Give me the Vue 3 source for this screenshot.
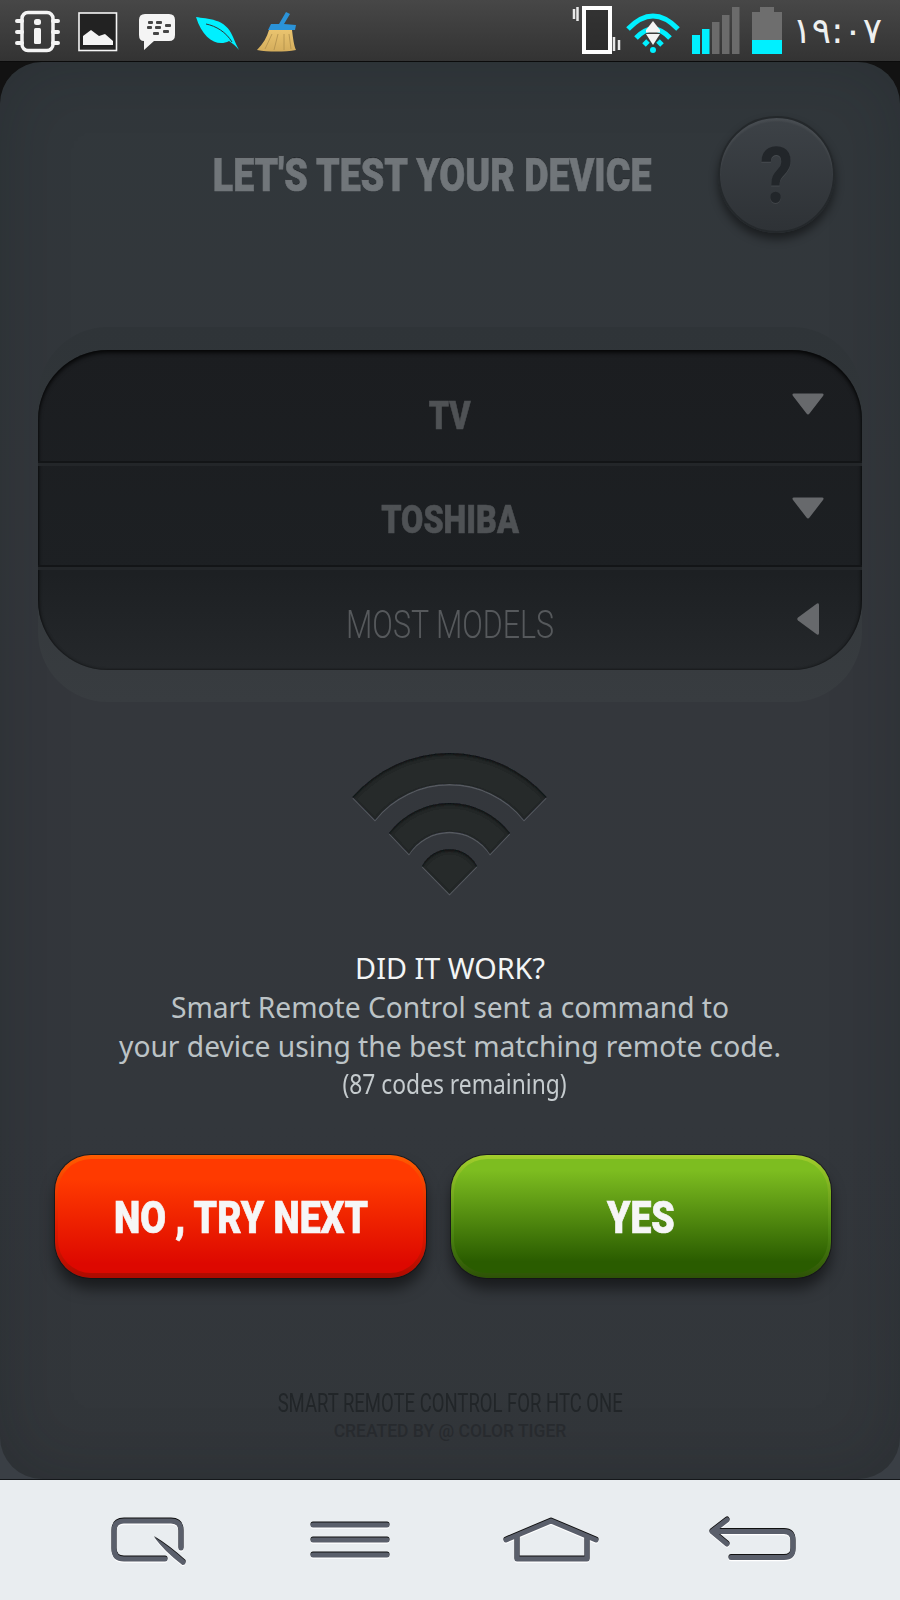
<template>
  <div class="screen">
    <header class="status-bar">
      <svg class="status-left" width="320" height="61" viewBox="0 0 320 61">
        <!-- chip / info -->
        <rect x="22" y="12.500" width="31" height="38" rx="6" fill="none" stroke="#f4f4f4" stroke-width="3.500" />
        <path d="M17 21h5M17 32h5M17 43h5M53 21h5M53 32h5M53 43h5" stroke="#f4f4f4" stroke-width="4" stroke-linecap="round" />
        <rect x="34" y="19" width="7" height="6" rx="2.500" fill="#f4f4f4" />
        <rect x="34" y="28" width="7" height="16" rx="1.500" fill="#f4f4f4" />
        <!-- gallery -->
        <rect x="79" y="13" width="37.500" height="37.500" fill="#222" stroke="#f4f4f4" stroke-width="1.600" />
        <path d="M83 45V36L91 30L99 36L105 34L113 41V45Z" fill="#f4f4f4" />
        <path d="M83 48H113" stroke="#2c2c2c" stroke-width="1" />
        <!-- bbm -->
        <path d="M145 14H169Q175 14 175 20V35Q175 41 169 41H154L144 50V41Q139 41 139 35V20Q139 14 145 14Z" fill="#f4f4f4" />
        <g fill="#444">
          <rect x="148" y="21" width="5" height="3" rx="1" /><rect x="156" y="21" width="6" height="3" rx="1" />
          <rect x="147" y="26" width="5" height="3" rx="1" /><rect x="155" y="26" width="6" height="3" rx="1" />
          <rect x="165" y="24" width="6" height="3" rx="1" /><rect x="163" y="30" width="6" height="3" rx="1" />
          <rect x="153" y="32" width="6" height="3" rx="1" />
        </g>
        <!-- leaf -->
        <path d="M196 17C207 19 226 18 233 37C235 42 237 46 239 50C236 46 232 43 229 41C218 47 203 40 196 17Z" fill="#00f0ff" />
        <path d="M206 24C216 26 226 32 232 42" fill="none" stroke="#333" stroke-width="1" />
        <!-- broom -->
        <path d="M269 30H292C293 38 294 46 296 50C285 52 268 52 257 50C263 44 267 37 269 30Z" fill="url(#broomFill)" />
        <path d="M272 34L265 49M278 34L274 50M284 34L284 50M289 34L291 49" stroke="#b08f4c" stroke-width="0.800" />
        <path d="M286 12L290 14L284 24L296 25L295 30H268L271 24L279 24Z" fill="#2b93d8" />
        <defs>
          <linearGradient id="broomFill" x1="0" y1="0" x2="0" y2="1">
            <stop offset="0" stop-color="#eac46f" />
            <stop offset="1" stop-color="#d4ad5c" />
          </linearGradient>
        </defs>
      </svg>

      <div class="status-right">
        <svg width="225" height="61" viewBox="565 0 225 61">
          <!-- vibrate -->
          <rect x="584" y="8" width="26" height="44" fill="#222" fill-opacity="0.5" stroke="#fff" stroke-width="4" />
          <path d="M574 9V19M577.500 7V21M614 37V51M619 40V50" stroke="#e8e8e8" stroke-width="2.500" />
          <!-- wifi -->
          <g fill="none" stroke="#00f0ff" stroke-width="5">
            <path d="M628 29Q653 3 678 29" />
            <path d="M636 38Q653 20 670 38" />
            <path d="M644 45L648 41M662 45L658 41" />
          </g>
          <circle cx="653" cy="50" r="3" fill="#00f0ff" />
          <path d="M653 21L660 30H646Z" fill="#f4f4f4" />
          <rect x="646" y="30" width="14" height="2.500" fill="#f4f4f4" />
          <path d="M646 34H660L653 45Z" fill="#f4f4f4" />
          <!-- signal -->
          <rect x="692" y="35" width="8" height="19" fill="#00f0ff" />
          <rect x="702" y="29" width="7.500" height="25" fill="#00f0ff" />
          <rect x="712" y="22" width="7.500" height="32" fill="#6b6b6b" />
          <rect x="722" y="15" width="7.500" height="39" fill="#6b6b6b" />
          <rect x="732" y="7" width="7.500" height="47" fill="#6b6b6b" />
          <!-- battery -->
          <path d="M760 7H774V12H782V54H752V12H760Z" fill="#6e6e6e" />
          <rect x="752" y="40" width="30" height="14" fill="#00f0ff" />
        </svg>
        <span class="clock">١٩:٠٧</span>
      </div>
    </header>

    <div class="panel-back">
      <main class="panel">
        <section class="head">
          <h1 class="title"><span>LET'S TEST YOUR DEVICE</span></h1>
          <button class="help" type="button"><span>?</span></button>
        </section>

        <section class="well-rim">
          <div class="well">
            <div v-for="row in rows" :key="row.label" class="row" :class="row.cls">
              <span class="row-label">{{ row.label }}</span>
              <svg class="row-arrow" width="32" height="32" viewBox="0 0 32 32">
                <path v-if="row.dir === 'down'" d="M2 0.500H30Q32.500 0.500 31 3L17.500 20.500Q16 22.500 14.500 20.500L1 3Q-0.500 0.500 2 0.500Z" fill="#67696c" />
                <path v-else d="M25 0.500Q27 -0.500 27 2V30Q27 32.500 25 31.500L6 17.500Q4.500 16 6 14.500Z" fill="#67696c" />
              </svg>
            </div>
          </div>
        </section>

        <svg class="signal" width="220" height="155" viewBox="340 745 220 155">
          <defs>
            <filter id="inset" x="-10%" y="-10%" width="120%" height="120%">
              <feOffset dy="2" />
              <feGaussianBlur stdDeviation="1.500" result="off" />
              <feFlood flood-color="#000" flood-opacity="0.75" />
              <feComposite in2="off" operator="out" />
              <feComposite in2="SourceAlpha" operator="in" result="shade" />
              <feMerge>
                <feMergeNode in="SourceGraphic" />
                <feMergeNode in="shade" />
              </feMerge>
            </filter>
          </defs>
          <g fill="#565a60" transform="translate(0 1.500)">
            <path v-for="d in wedges" :key="d" :d="d" />
          </g>
          <g fill="#26292c" filter="url(#inset)">
            <path v-for="d in wedges" :key="d" :d="d" />
          </g>
        </svg>

        <section class="message">
          <p class="m-title">DID IT WORK?</p>
          <p class="m-body">Smart Remote Control sent a command to</p>
          <p class="m-body">your device using the best matching remote code.</p>
          <p class="m-note"><span>(87 codes remaining)</span></p>
        </section>

        <section class="actions">
          <button class="btn btn-no" type="button"><span class="face"><span class="label">NO , TRY NEXT</span></span></button>
          <button class="btn btn-yes" type="button"><span class="face"><span class="label">YES</span></span></button>
        </section>

        <footer class="credits">
          <p class="c-app"><span>SMART REMOTE CONTROL FOR HTC ONE</span></p>
          <p class="c-by"><span>CREATED BY @ COLOR TIGER</span></p>
        </footer>
      </main>
    </div>

    <nav class="nav-bar">
      <svg v-for="icon in navIcons" :key="icon.name" width="100" height="50" viewBox="0 0 100 50">
        <g v-for="layer in layers" :key="layer" :class="layer">
          <path :d="icon.line" class="nav-line" />
          <path v-if="icon.fill" :d="icon.fill" class="nav-fill" />
        </g>
      </svg>
    </nav>
  </div>
</template>

<script setup>
const rows = [
  { label: 'TV', cls: 'row-tv', dir: 'down' },
  { label: 'TOSHIBA', cls: 'row-brand', dir: 'down' },
  { label: 'MOST MODELS', cls: 'row-model', dir: 'left' },
]

const wedges = [
  'M352.500 797A129 129 0 0 1 546.500 797L524 820A95 95 0 0 0 375 820Z',
  'M389 833A76 76 0 0 1 510 833L490 854A48 48 0 0 0 409 854Z',
  'M422 866A31 31 0 0 1 477 866L449.500 894Z',
]

const layers = ['nav-lo', 'nav-hi', 'nav-main']

const navIcons = [
  {
    name: 'search',
    line: 'M82 32V15Q82 5 72 5H25Q15 5 15 15V33Q15 43 25 43H66',
    fill: 'M55 21Q70 30 86.600 45Q87 49 83.400 48.900Q66 36 55 21Z',
  },
  { name: 'menu', line: 'M14 9H88M14 24H88M14 39H88' },
  { name: 'home', line: 'M7 24L52 5L97 24M18 21V43H88V21' },
  {
    name: 'back',
    line: 'M28 4L13 15.500L28 28M13 15.500H85Q94 15.500 94 25V33Q94 41.500 85 41.500H32',
  },
]
</script>

<style>
html,
body {
  margin: 0;
  background: #111;
}
</style>

<style scoped>
.screen {
  width: 900px;
  height: 1600px;
  display: flex;
  flex-direction: column;
  overflow: hidden;
  font-family: "Noto Sans", "Open Sans", sans-serif;
}

.status-bar {
  flex: 0 0 61px;
  display: flex;
  justify-content: space-between;
  background: linear-gradient(#474747, #333);
}

.status-left {
  display: block;
}

.status-right {
  display: flex;
  align-items: center;
  padding-right: 18px;
}

.status-right svg {
  display: block;
}

.clock {
  width: 92px;
  text-align: right;
  color: #eef0f0;
  font-family: "DejaVu Sans", sans-serif;
  font-size: 36px;
  line-height: 1;
  letter-spacing: -1px;
}

.panel-back {
  flex: 0 0 1418px;
  border-top: 1px solid #0b0b0b;
  box-sizing: border-box;
  background: linear-gradient(#121212 0, #121212 120px, #3a3f45 120px);
}

.panel {
  height: 1417px;
  display: flex;
  flex-direction: column;
  border-radius: 42px;
  background: linear-gradient(#31373b, #34373c 45%, #33373c 75%, #32363a);
  box-shadow: inset 0 0 70px rgba(20, 24, 28, 0.22);
}

.head {
  display: flex;
  align-items: center;
  justify-content: space-between;
  padding: 54px 65px 0 0;
}

.title {
  width: 864px;
  margin: 0 -717px 0 0;
  text-align: center;
  font-family: Roboto, sans-serif;
  font-size: 47px;
  font-weight: 900;
  line-height: 56px;
  color: #71767a;
  text-shadow: 0 -1px 0 #1f2225;
  -webkit-text-stroke: 0.7px #71767a;
  white-space: nowrap;
}

.title span {
  display: inline-block;
  transform: scaleX(0.8);
}

.help {
  width: 117px;
  height: 117px;
  padding: 4px 0 0;
  border: 2px solid #24282b;
  border-radius: 50%;
  background: linear-gradient(#3d4247, #2e3236);
  box-shadow:
    inset 0 3px 2px rgba(255, 255, 255, 0.06),
    0 6px 10px rgba(0, 0, 0, 0.48);
  color: #22262a;
  font-family: Roboto, sans-serif;
  font-size: 78px;
  font-weight: 700;
  line-height: 1;
}

.help span {
  display: inline-block;
  transform: scaleX(0.85);
  text-shadow: 0 1px 0 rgba(255, 255, 255, 0.08);
}

.well-rim {
  margin: 94px 38px 0;
  padding: 23px 0 32px;
  border-radius: 70px;
  background: linear-gradient(#2f3438, #32373a 50%, #383c40);
}

.well {
  height: 320px;
  border-radius: 70px;
  background: linear-gradient(#1b1d20, #1d2023 70%, #25282b);
  box-shadow:
    inset 0 3px 4px rgba(0, 0, 0, 0.7),
    inset 0 0 3px rgba(0, 0, 0, 0.6);
}

.row {
  display: grid;
  grid-template-columns: 1fr auto 1fr;
  box-sizing: border-box;
  border-bottom: 2px solid #131517;
}

.row + .row {
  border-top: 3px solid #232629;
}

.row-tv {
  height: 113px;
}

.row-brand {
  height: 104px;
}

.row-model {
  height: 103px;
  border-bottom: 0;
}

.row-label {
  grid-column: 2;
  font-family: Roboto, sans-serif;
  font-size: 38px;
  font-weight: 900;
  line-height: 30px;
  color: #4f5255;
  -webkit-text-stroke: 0.6px #4f5255;
  transform: scaleX(0.85);
}

.row-tv .row-label {
  margin-top: 51px;
}

.row-brand .row-label {
  margin-top: 39px;
}

.row-model .row-label {
  margin-top: 40px;
  font-weight: 300;
  color: #56595c;
  -webkit-text-stroke: 0;
  transform: scaleX(0.8);
}

.row-arrow {
  grid-column: 3;
  justify-self: end;
  margin-right: 38px;
}

.row-tv .row-arrow {
  margin-top: 43px;
}

.row-brand .row-arrow {
  margin-top: 31px;
}

.row-model .row-arrow {
  margin-top: 33px;
}

.signal {
  display: block;
  margin: 43px auto 0;
}

.message {
  margin-top: 47px;
  text-align: center;
}

.message p {
  margin: 0;
  white-space: nowrap;
}

.m-title {
  font-size: 28.800px;
  line-height: 41px;
  color: #f3f5f5;
}

.m-body {
  font-size: 28.200px;
  line-height: 39px;
  color: #bcc3c6;
}

.m-note {
  padding-left: 9px;
  font-size: 28px;
  line-height: 34px;
  color: #c5cbce;
}

.m-note span {
  display: inline-block;
  transform: scaleX(0.815);
}

.actions {
  display: flex;
  gap: 25px;
  margin: 55px 0 0 55px;
}

.btn {
  height: 123px;
  padding: 4px 3px 5px;
  border: 0;
  border-radius: 36px;
  font-family: Roboto, sans-serif;
  box-shadow:
    0 0 0 1px rgba(20, 20, 20, 0.75),
    0 11px 14px rgba(0, 0, 0, 0.5);
}

.btn-no {
  width: 371px;
  background: linear-gradient(#ff5c00, #e01a00 60%, #ae0a00);
}

.btn-yes {
  width: 380px;
  background: linear-gradient(#a2ce2c, #4f8a12 60%, #2d5206);
}

.face {
  display: flex;
  align-items: center;
  justify-content: center;
  height: 100%;
  padding-top: 3px;
  box-sizing: border-box;
  border-radius: 33px;
  color: #f6f6f6;
  font-size: 45px;
  font-weight: 900;
  -webkit-text-stroke: 0.7px #f6f6f6;
}

.label {
  display: inline-block;
  transform: scaleX(0.83);
  white-space: nowrap;
}

.btn-no .face {
  background: linear-gradient(#ff3a00 18%, #dd0800 92%);
}

.btn-yes .face {
  background: linear-gradient(#7dbd20 10%, #2a5c00 90%);
}

.credits {
  margin-top: 111px;
  text-align: center;
  white-space: nowrap;
}

.credits p {
  margin: 0;
}

.c-app {
  font-family: Roboto, sans-serif;
  font-size: 25px;
  font-weight: 400;
  line-height: 30px;
  color: #212528;
}

.c-app span,
.c-by span {
  display: inline-block;
}

.c-app span {
  transform: scaleX(0.74);
}

.c-by {
  margin-top: 2px;
  font-family: Roboto, sans-serif;
  font-size: 17.500px;
  font-weight: 500;
  line-height: 24px;
  color: #272a2e;
}

.nav-bar {
  flex: 0 0 121px;
  box-sizing: border-box;
  border-top: 1px solid #15181b;
  padding: 36px 0 0 49px;
  display: grid;
  grid-template-columns: repeat(4, 200px);
  justify-items: center;
  align-items: start;
  background: #e9edf0;
}

.nav-line {
  fill: none;
  stroke: currentColor;
  stroke-width: 5;
  stroke-linecap: round;
  stroke-linejoin: round;
}

.nav-fill {
  fill: currentColor;
}

.nav-lo {
  color: #fff;
  transform: translateY(1.2px);
}

.nav-hi {
  color: #111;
  transform: translateY(-1px);
}

.nav-main {
  color: #5a5f6b;
}
</style>
